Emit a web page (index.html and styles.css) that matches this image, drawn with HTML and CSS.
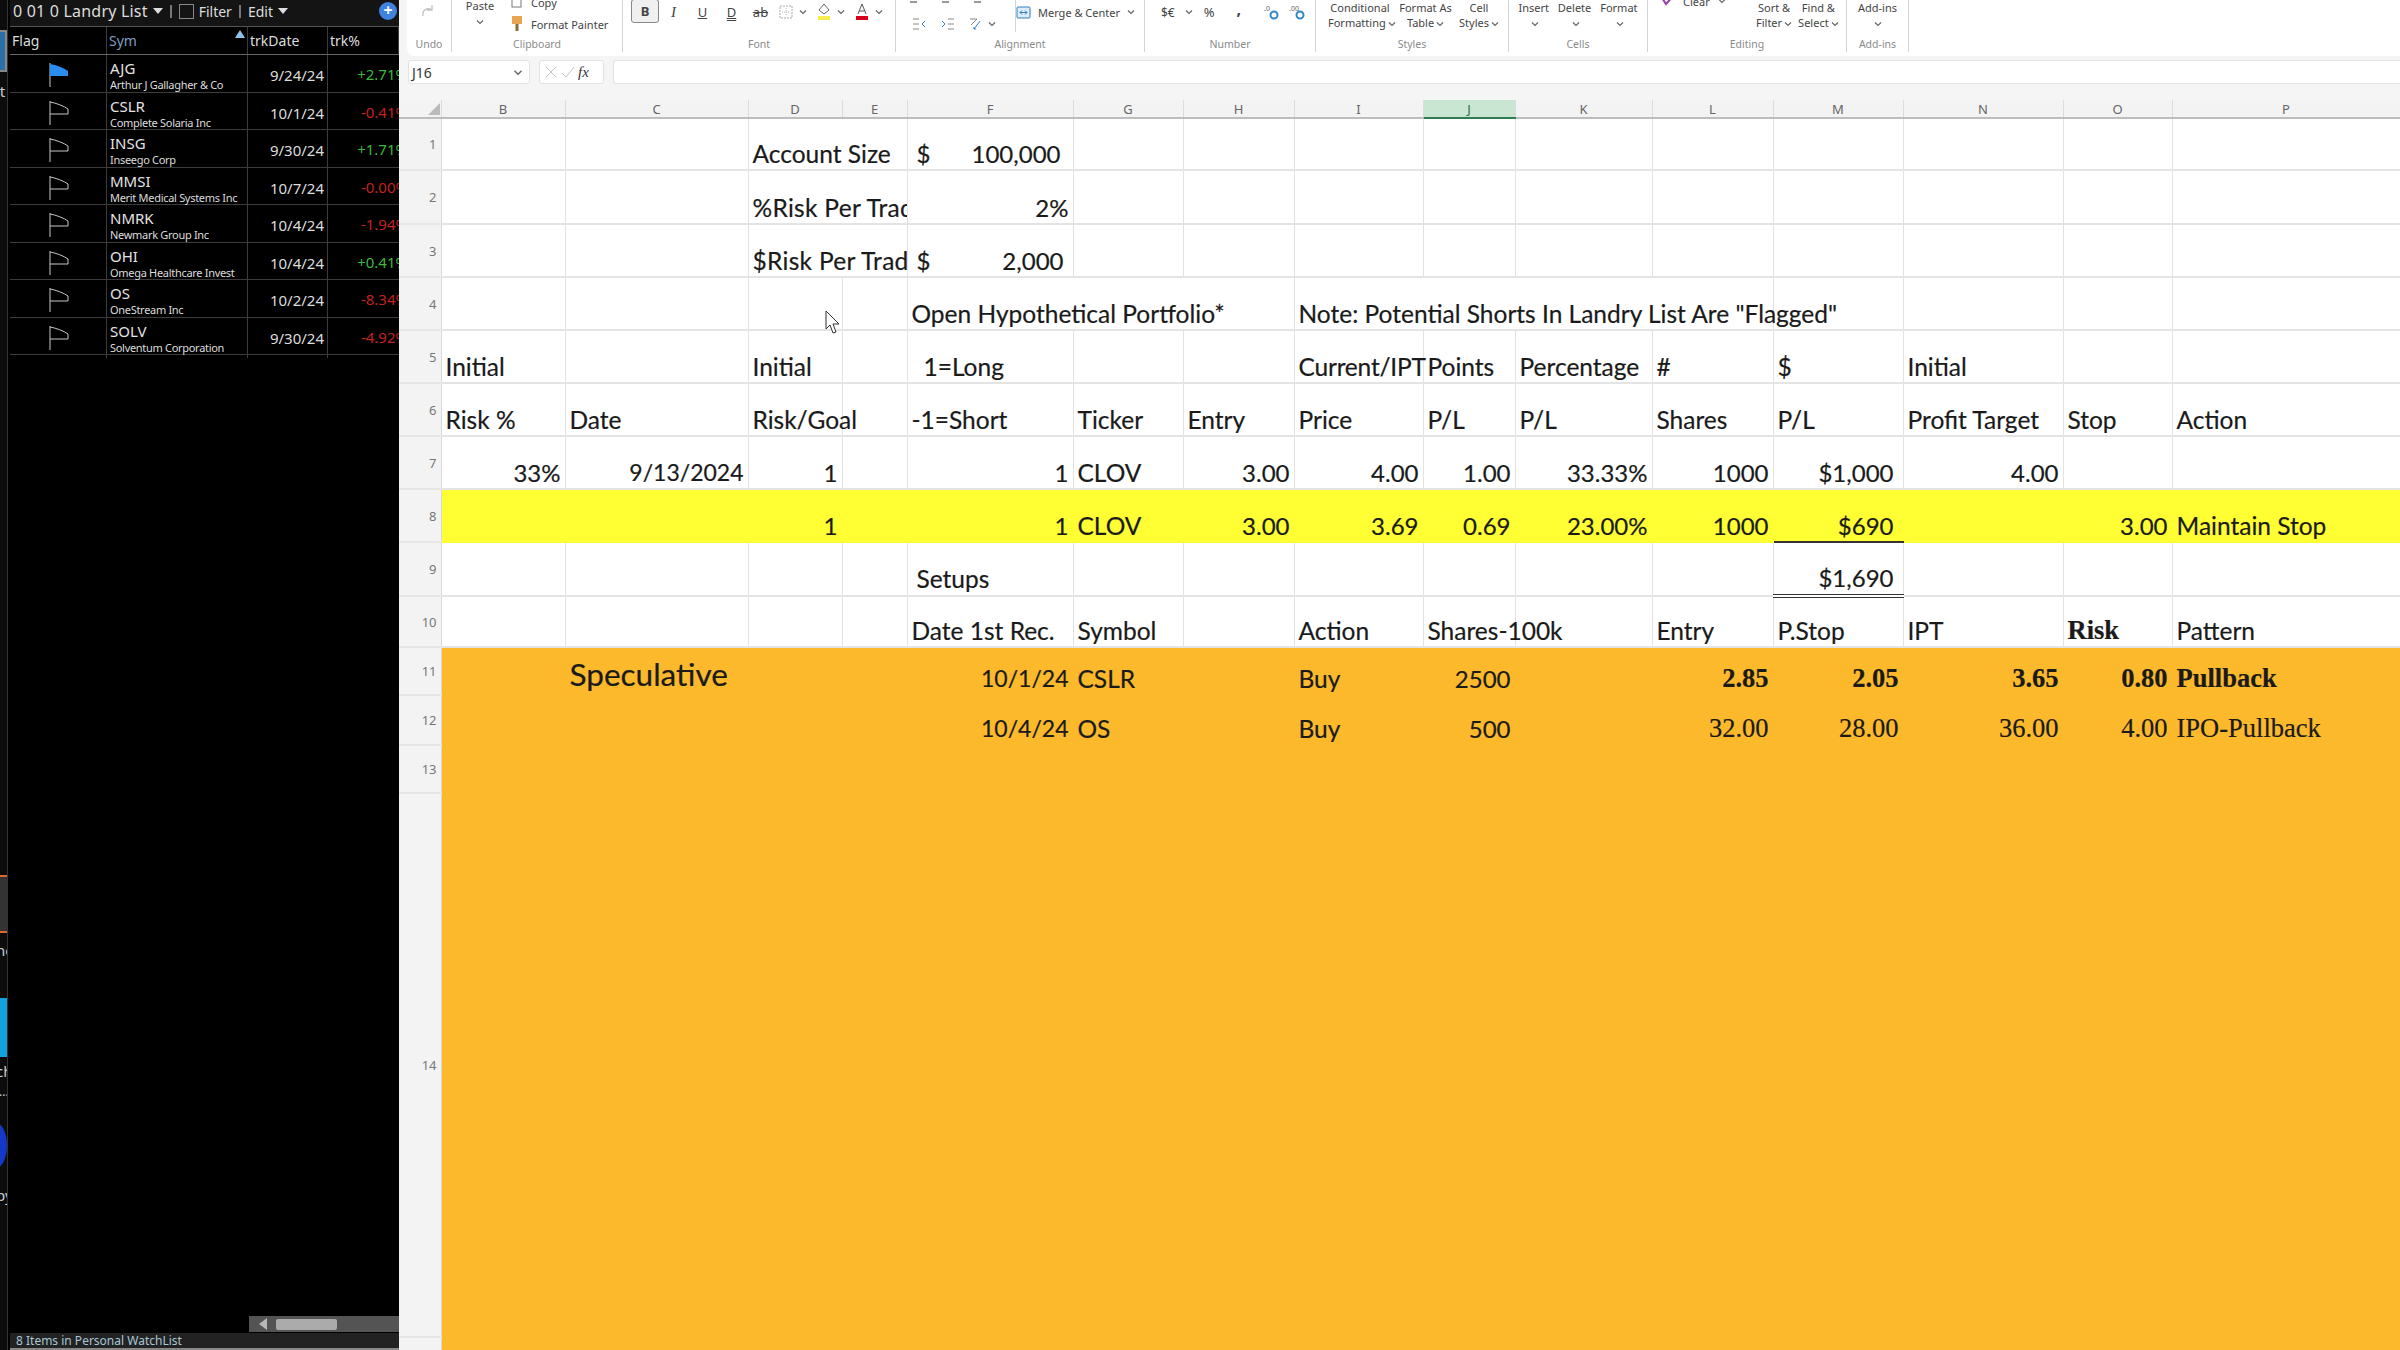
FILE: index.html
```html
<!DOCTYPE html>
<html lang="en">
<head>
    <meta charset="UTF-8">
    <title>Landry List</title>
    <link rel="stylesheet" href="styles.css">
</head>
<body>
    <svg class="defs" width="0" height="0">
        <symbol id="chev" viewBox="0 0 8 6"><path d="M1 1.5 4 4.5 7 1.5" fill="none" stroke="#666" stroke-width="1.2"/></symbol>
        <symbol id="flag" viewBox="0 0 22 26"><path d="M2 1V25M2 2C8 3 16 6 20 9V14H2" fill="none" stroke="#c8c8c8" stroke-width="1"/></symbol>
    </svg>

    <!-- cut-off neighbour window on the far left -->
    <div class="strip">
        <div class="strip-lock"></div>
        <span class="strip-text strip-it">it</span>
        <div class="strip-orange"></div>
        <span class="strip-text strip-nc">nc</span>
        <div class="strip-blue"></div>
        <span class="strip-text strip-ch">ch</span>
        <span class="strip-text strip-dots">...</span>
        <div class="strip-circle"></div>
        <span class="strip-text strip-py">py</span>
    </div>

    <!-- watchlist -->
    <aside class="watch">
        <div class="watch-top">
            <span class="watch-title">0 01 0 Landry List</span>
            <i class="tri"></i>
            <i class="bar"></i>
            <i class="check"></i>
            <span>Filter</span>
            <i class="bar"></i>
            <span>Edit</span>
            <i class="tri"></i>
            <span class="plus">+</span>
        </div>
        <div class="watch-row watch-head">
            <div>Flag</div>
            <div class="sym-head">Sym<i class="sort"></i></div>
            <div>trkDate</div>
            <div>trk%</div>
        </div>
        <div class="watch-row">
            <div class="flag-cell"><svg width="22" height="26" viewBox="0 0 22 26"><path d="M2 1V25" stroke="#c8c8c8" fill="none"/><path d="M2 2C8 3 16 6 20 9V14H2Z" fill="#2a8cf0"/></svg></div>
            <div class="sym"><b>AJG</b><small>Arthur J Gallagher &amp; Co</small></div>
            <div class="date">9/24/24</div>
            <div class="pct up"><span>+2.71%</span></div>
        </div>
        <div class="watch-row">
            <div class="flag-cell"><svg width="22" height="26"><use href="#flag"/></svg></div>
            <div class="sym"><b>CSLR</b><small>Complete Solaria Inc</small></div>
            <div class="date">10/1/24</div>
            <div class="pct down"><span>-0.41%</span></div>
        </div>
        <div class="watch-row">
            <div class="flag-cell"><svg width="22" height="26"><use href="#flag"/></svg></div>
            <div class="sym"><b>INSG</b><small>Inseego Corp</small></div>
            <div class="date">9/30/24</div>
            <div class="pct up"><span>+1.71%</span></div>
        </div>
        <div class="watch-row">
            <div class="flag-cell"><svg width="22" height="26"><use href="#flag"/></svg></div>
            <div class="sym"><b>MMSI</b><small>Merit Medical Systems Inc</small></div>
            <div class="date">10/7/24</div>
            <div class="pct down"><span>-0.00%</span></div>
        </div>
        <div class="watch-row">
            <div class="flag-cell"><svg width="22" height="26"><use href="#flag"/></svg></div>
            <div class="sym"><b>NMRK</b><small>Newmark Group Inc</small></div>
            <div class="date">10/4/24</div>
            <div class="pct down"><span>-1.94%</span></div>
        </div>
        <div class="watch-row">
            <div class="flag-cell"><svg width="22" height="26"><use href="#flag"/></svg></div>
            <div class="sym"><b>OHI</b><small>Omega Healthcare Invest</small></div>
            <div class="date">10/4/24</div>
            <div class="pct up"><span>+0.41%</span></div>
        </div>
        <div class="watch-row">
            <div class="flag-cell"><svg width="22" height="26"><use href="#flag"/></svg></div>
            <div class="sym"><b>OS</b><small>OneStream Inc</small></div>
            <div class="date">10/2/24</div>
            <div class="pct down"><span>-8.34%</span></div>
        </div>
        <div class="watch-row">
            <div class="flag-cell"><svg width="22" height="26"><use href="#flag"/></svg></div>
            <div class="sym"><b>SOLV</b><small>Solventum Corporation</small></div>
            <div class="date">9/30/24</div>
            <div class="pct down"><span>-4.92%</span></div>
        </div>
        <div class="watch-fill"></div>
        <div class="watch-scroll">
            <div class="scroll-track"><i class="scroll-arrow"></i><i class="scroll-thumb"></i></div>
        </div>
        <div class="watch-status">8 Items in Personal WatchList</div>
    </aside>

    <main class="excel">
        <!-- ribbon -->
        <div class="ribbon">
            <div class="group g-undo">
                <div class="group-body">
                    <svg class="redo" width="16" height="16" viewBox="0 0 16 16"><path d="M3 13C2 7 7 4 12 7M12 2V7H7" fill="none" stroke="#c4c4c4" stroke-width="1.4"/></svg>
                </div>
                <div class="group-label">Undo</div>
            </div>
            <div class="group g-clip">
                <div class="group-body">
                    <div class="paste">Paste<svg width="8" height="6"><use href="#chev"/></svg></div>
                    <div class="clip-list">
                        <div class="clip-item clip-copy"><svg width="14" height="14" viewBox="0 0 14 14"><rect x="2" y="1" width="9" height="11" fill="none" stroke="#777"/></svg>Copy</div>
                        <div class="clip-item"><svg width="14" height="18" viewBox="0 0 14 18"><rect x="2" y="1" width="10" height="8" fill="#e8a552"/><path d="M7 9V16" stroke="#8a6a3a" stroke-width="3"/></svg>Format Painter</div>
                    </div>
                </div>
                <div class="group-label">Clipboard</div>
            </div>
            <div class="group g-font">
                <div class="group-body font-tools">
                    <span class="tool tool-bold">B</span>
                    <span class="tool tool-i">I</span>
                    <span class="tool tool-u">U</span>
                    <span class="tool tool-d">D</span>
                    <span class="tool tool-s">ab</span>
                    <svg width="14" height="14" viewBox="0 0 14 14"><rect x="1" y="1" width="12" height="12" fill="none" stroke="#aaa" stroke-dasharray="2 1"/><path d="M7 3V11M3 7H11" stroke="#bbb" stroke-dasharray="1 1"/></svg>
                    <svg class="mini" width="8" height="6"><use href="#chev"/></svg>
                    <svg class="tool-fill" width="14" height="18" viewBox="0 0 14 18"><path d="M7 1 12 7 7 11 2 7Z" fill="none" stroke="#666"/><rect x="1" y="13" width="12" height="4" fill="#f6ee50"/></svg>
                    <svg class="mini" width="8" height="6"><use href="#chev"/></svg>
                    <svg class="tool-fill" width="14" height="18" viewBox="0 0 14 18"><path d="M3 11 7 1 11 11M4.500 8H9.500" fill="none" stroke="#555"/><rect x="1" y="13" width="12" height="4" fill="#d8001a"/></svg>
                    <svg class="mini" width="8" height="6"><use href="#chev"/></svg>
                </div>
                <div class="group-label">Font</div>
            </div>
            <div class="group g-align">
                <div class="group-body align-tools">
                    <div class="align-col">
                        <div class="align-top"><i></i><i></i><i></i></div>
                        <div class="align-bottom">
                            <svg width="15" height="12" viewBox="0 0 15 12"><path d="M1 1H7M1 6H7M1 11H7" stroke="#888"/><path d="M13 3 10 6 13 9" fill="none" stroke="#3a86c8"/></svg>
                            <svg width="15" height="12" viewBox="0 0 15 12"><path d="M8 1H14M8 6H14M8 11H14" stroke="#888"/><path d="M2 3 5 6 2 9" fill="none" stroke="#3a86c8"/></svg>
                            <svg width="15" height="14" viewBox="0 0 15 14"><path d="M2 2H9L3 8" fill="none" stroke="#888"/><path d="M12 4 6 12M8 12H6V10" fill="none" stroke="#3a86c8"/></svg>
                            <svg width="8" height="6"><use href="#chev"/></svg>
                        </div>
                    </div>
                    <div class="merge">
                        <svg width="15" height="15" viewBox="0 0 15 15"><rect x="1" y="2" width="13" height="11" rx="1" fill="#dcecf8" stroke="#2f7fbf"/><path d="M4 7.500H11M4 7.500 6 5.500M4 7.500 6 9.500M11 7.500 9 5.500M11 7.500 9 9.500" fill="none" stroke="#2f7fbf"/></svg>
                        <span>Merge &amp; Center</span>
                        <svg width="8" height="6"><use href="#chev"/></svg>
                    </div>
                </div>
                <div class="group-label">Alignment</div>
            </div>
            <div class="group g-num">
                <div class="group-body num-tools">
                    <span class="num-currency">$€</span>
                    <svg width="8" height="6"><use href="#chev"/></svg>
                    <span class="num-pct">%</span>
                    <span class="num-comma">,</span>
                    <svg width="16" height="16" viewBox="0 0 16 16"><text x="1" y="7" font-size="7" fill="#666">.0</text><circle cx="11" cy="11" r="3.500" fill="none" stroke="#2f86c8" stroke-width="2"/></svg>
                    <svg width="16" height="16" viewBox="0 0 16 16"><text x="0" y="7" font-size="7" fill="#666">.00</text><circle cx="11" cy="11" r="3.500" fill="none" stroke="#2f86c8" stroke-width="2"/></svg>
                </div>
                <div class="group-label">Number</div>
            </div>
            <div class="group g-styles">
                <div class="group-body stack-tools">
                    <div class="stack s-cond">Conditional<br>Formatting<svg width="8" height="6"><use href="#chev"/></svg></div>
                    <div class="stack s-table">Format As<br>Table<svg width="8" height="6"><use href="#chev"/></svg></div>
                    <div class="stack s-cell">Cell<br>Styles<svg width="8" height="6"><use href="#chev"/></svg></div>
                </div>
                <div class="group-label">Styles</div>
            </div>
            <div class="group g-cells">
                <div class="group-body cell-tools">
                    <div class="stack">Insert<br><svg width="8" height="6"><use href="#chev"/></svg></div>
                    <div class="stack">Delete<br><svg width="8" height="6"><use href="#chev"/></svg></div>
                    <div class="stack">Format<br><svg width="8" height="6"><use href="#chev"/></svg></div>
                </div>
                <div class="group-label">Cells</div>
            </div>
            <div class="group g-edit">
                <div class="group-body edit-tools">
                    <div class="clear">
                        <svg width="14" height="12" viewBox="0 0 14 12"><path d="M1 3 5 9 13 0" fill="none" stroke="#9b3fae" stroke-width="2"/></svg>
                        <span>Clear</span>
                        <svg width="8" height="6"><use href="#chev"/></svg>
                    </div>
                    <div class="stack s-sort">Sort &amp;<br>Filter<svg width="8" height="6"><use href="#chev"/></svg></div>
                    <div class="stack">Find &amp;<br>Select<svg width="8" height="6"><use href="#chev"/></svg></div>
                </div>
                <div class="group-label">Editing</div>
            </div>
            <div class="group g-add">
                <div class="group-body addin-tools">
                    <div class="stack">Add-ins<br><svg width="8" height="6"><use href="#chev"/></svg></div>
                </div>
                <div class="group-label">Add-ins</div>
            </div>
        </div>

        <!-- formula bar -->
        <div class="formula">
            <div class="name-box">J16<svg width="10" height="7"><use href="#chev"/></svg></div>
            <div class="fx-box">
                <svg width="14" height="14" viewBox="0 0 14 14"><path d="M2 2 12 12M12 2 2 12" stroke="#c4c4c4"/></svg>
                <svg width="14" height="14" viewBox="0 0 14 14"><path d="M1 8 5 12 13 2" fill="none" stroke="#c4c4c4"/></svg>
                <span class="fx">fx</span>
            </div>
            <div class="formula-input"></div>
        </div>

        <table class="sheet">
            <colgroup>
                <col class="c-hdr"><col class="c-b"><col class="c-c"><col class="c-d"><col class="c-e"><col class="c-f"><col class="c-g"><col class="c-h"><col class="c-i"><col class="c-j"><col class="c-k"><col class="c-l"><col class="c-m"><col class="c-n"><col class="c-o"><col class="c-p">
            </colgroup>
            <thead>
                <tr>
                    <th class="corner"><i></i></th><th>B</th><th>C</th><th>D</th><th>E</th><th>F</th><th>G</th><th>H</th><th>I</th><th class="active">J</th><th>K</th><th>L</th><th>M</th><th>N</th><th>O</th><th>P</th>
                </tr>
            </thead>
            <tbody>
                <tr class="r1">
                    <th>1</th><td></td><td></td><td colspan="2" class="clip">Account Size</td><td><div class="acct"><span>$</span><span>100,000</span></div></td><td></td><td></td><td></td><td></td><td></td><td></td><td></td><td></td><td></td><td></td>
                </tr>
                <tr class="r2">
                    <th>2</th><td></td><td></td><td colspan="2" class="clip clip-wide">%Risk Per Trade</td><td class="num tight">2%</td><td></td><td></td><td></td><td></td><td></td><td></td><td></td><td></td><td></td><td></td>
                </tr>
                <tr class="r3">
                    <th>3</th><td></td><td></td><td colspan="2" class="clip clip-wide">$Risk Per Trade</td><td><div class="acct acct-small"><span>$</span><span>2,000</span></div></td><td></td><td></td><td></td><td></td><td></td><td></td><td></td><td></td><td></td><td></td>
                </tr>
                <tr class="r4">
                    <th>4</th><td></td><td></td><td></td><td></td><td colspan="3">Open Hypothetical Portfolio*</td><td colspan="4">Note: Potential Shorts In Landry List Are "Flagged"</td><td></td><td></td><td></td><td></td>
                </tr>
                <tr class="r5">
                    <th>5</th><td>Initial</td><td></td><td>Initial</td><td></td><td class="in-long">1=Long</td><td></td><td></td><td class="snug">Current/IPT</td><td>Points</td><td>Percentage</td><td>#</td><td>$</td><td>Initial</td><td></td><td></td>
                </tr>
                <tr class="r6">
                    <th>6</th><td>Risk %</td><td>Date</td><td>Risk/Goal</td><td></td><td>-1=Short</td><td>Ticker</td><td>Entry</td><td>Price</td><td>P/L</td><td>P/L</td><td>Shares</td><td>P/L</td><td>Profit Target</td><td>Stop</td><td>Action</td>
                </tr>
                <tr class="r7">
                    <th>7</th><td class="num">33%</td><td class="num day">9/13/2024</td><td class="num">1</td><td></td><td class="num">1</td><td>CLOV</td><td class="num">3.00</td><td class="num">4.00</td><td class="num">1.00</td><td class="num">33.33%</td><td class="num">1000</td><td class="num pad-money">$1,000</td><td class="num">4.00</td><td></td><td></td>
                </tr>
                <tr class="r8 hl-yellow">
                    <th>8</th><td></td><td></td><td class="num">1</td><td></td><td class="num">1</td><td>CLOV</td><td class="num">3.00</td><td class="num">3.69</td><td class="num">0.69</td><td class="num">23.00%</td><td class="num">1000</td><td class="num pad-money sum-top">$690</td><td></td><td class="num">3.00</td><td>Maintain Stop</td>
                </tr>
                <tr class="r9">
                    <th>9</th><td></td><td></td><td></td><td></td><td class="in-setups">Setups</td><td></td><td></td><td></td><td></td><td></td><td></td><td class="num pad-money sum-total">$1,690</td><td></td><td></td><td></td>
                </tr>
                <tr class="r10">
                    <th>10</th><td></td><td></td><td></td><td></td><td>Date 1st Rec.</td><td>Symbol</td><td></td><td>Action</td><td>Shares-100k</td><td></td><td>Entry</td><td>P.Stop</td><td>IPT</td><td class="serif strong">Risk</td><td>Pattern</td>
                </tr>
                <tr class="r11 hl-orange">
                    <th>11</th><td></td><td class="spec">Speculative</td><td></td><td></td><td class="num day">10/1/24</td><td>CSLR</td><td></td><td>Buy</td><td class="num">2500</td><td></td><td class="num serif strong">2.85</td><td class="num serif strong">2.05</td><td class="num serif strong">3.65</td><td class="num serif strong">0.80</td><td class="serif strong">Pullback</td>
                </tr>
                <tr class="r12 hl-orange">
                    <th>12</th><td></td><td></td><td></td><td></td><td class="num day">10/4/24</td><td>OS</td><td></td><td>Buy</td><td class="num">500</td><td></td><td class="num serif">32.00</td><td class="num serif">28.00</td><td class="num serif">36.00</td><td class="num serif">4.00</td><td class="serif">IPO-Pullback</td>
                </tr>
                <tr class="r13 hl-orange">
                    <th>13</th><td colspan="15"></td>
                </tr>
                <tr class="r14 hl-orange">
                    <th>14</th><td colspan="15"></td>
                </tr>
                <tr class="r15 hl-orange">
                    <th>15</th><td colspan="15"></td>
                </tr>
            </tbody>
        </table>
    </main>

    <!-- mouse pointer caught in the recording -->
    <svg class="pointer" width="18" height="26" viewBox="0 0 18 26"><path d="M2 2V20L6 16 9 24 12 23 9 15H15Z" fill="#fff" stroke="#333" stroke-width="1"/></svg>
</body>
</html>
```

FILE: styles.css
```css
* {
    margin: 0;
    padding: 0;
    box-sizing: border-box;
}

body {
    width: 2400px;
    height: 1350px;
    overflow: hidden;
    display: flex;
    position: relative;
    background: #000;
    font-family: "Noto Sans", sans-serif;
}

.defs {
    position: absolute;
}

/* far left strip */
.strip {
    width: 8px;
    flex: none;
    display: flex;
    flex-direction: column;
    background: #0c0c0c;
    border-right: 1px solid #333;
    overflow: hidden;
    color: #ccc;
}

.strip-lock {
    height: 42px;
    margin-top: 30px;
    background: #2b6fa8;
    border: 2px solid #888;
    border-left: 0;
}

.strip-text {
    font-size: 15px;
    line-height: 18px;
    height: 18px;
    margin-left: -4px;
    white-space: nowrap;
}

.strip-it { margin-top: 10px; }

.strip-orange {
    height: 58px;
    margin-top: 775px;
    background: #333;
    border-top: 2px solid #e0662a;
    border-bottom: 2px solid #e0662a;
}

.strip-nc { margin-top: 8px; }

.strip-blue {
    height: 59px;
    margin-top: 39px;
    background: #13a3dc;
}

.strip-ch { margin-top: 5px; }

.strip-dots {
    margin: 3px 0 0 -1px;
    font-size: 12px;
}

.strip-circle {
    width: 22px;
    height: 45px;
    flex: none;
    margin: 22px 0 0 -15px;
    border-radius: 50%;
    background: #1438c8;
}

.strip-py { margin-top: 18px; }

/* watchlist panel */
.watch {
    width: 391px;
    flex: none;
    display: flex;
    flex-direction: column;
    padding-left: 2px;
    background: #000;
    color: #ddd;
    overflow: hidden;
}

.watch-top {
    height: 27px;
    flex: none;
    display: flex;
    align-items: center;
    gap: 5px;
    padding: 0 0 4px 3px;
    background: #141414;
    border-bottom: 1px solid #555;
    font-size: 14px;
}

.watch-title {
    font-size: 16px;
    letter-spacing: 0.2px;
    white-space: nowrap;
}

.tri {
    width: 0;
    height: 0;
    border: 5px solid transparent;
    border-top: 6px solid #ddd;
    border-bottom: 0;
}

.bar {
    width: 2px;
    height: 13px;
    margin: 0 2px;
    background: #777;
}

.check {
    width: 15px;
    height: 15px;
    border: 1px solid #888;
}

.plus {
    width: 18px;
    height: 18px;
    margin-left: auto;
    margin-right: 2px;
    border-radius: 50%;
    background: #3f82e0;
    color: #fff;
    font-size: 16px;
    font-weight: 700;
    line-height: 17px;
    text-align: center;
}

.watch-row {
    display: grid;
    grid-template-columns: 97px 141px 80px 71px;
    height: 37.500px;
    flex: none;
    border-bottom: 1px solid #3c3c3c;
}

.watch-row > div {
    border-right: 1px solid #3c3c3c;
    min-width: 0;
}

.watch-head {
    height: 28px;
    border-bottom: 1px solid #666;
    font-size: 14px;
    line-height: 27px;
    color: #ddd;
}

.watch-head > div {
    padding-left: 2px;
}

.sym-head {
    position: relative;
    color: #7f9cc0;
}

.sort {
    position: absolute;
    top: 3px;
    right: 2px;
    width: 0;
    height: 0;
    border: 5.500px solid transparent;
    border-bottom: 8px solid #8ec4ea;
    border-top: 0;
}

.flag-cell {
    display: flex;
    align-items: center;
    padding-left: 38px;
}

.sym {
    padding: 5px 0 0 3px;
    white-space: nowrap;
}

.sym b {
    display: block;
    font-weight: 400;
    font-size: 15px;
    line-height: 17px;
    color: #e4e4e4;
}

.sym small {
    display: block;
    font-size: 11px;
    line-height: 15px;
    letter-spacing: -0.3px;
    color: #ddd;
}

.date {
    padding-right: 3px;
    text-align: right;
    font-size: 15px;
    line-height: 40px;
    color: #ddd;
}

.pct {
    display: flex;
    justify-content: flex-end;
    overflow: hidden;
    font-size: 15px;
    line-height: 39px;
    border-right: 0 !important;
}

.pct span {
    margin-right: -9px;
}

.up { color: #3cb83c; }
.down { color: #c22222; }

.watch-fill {
    flex: 1;
}

.watch-scroll {
    height: 16px;
    flex: none;
    display: flex;
    justify-content: flex-end;
}

.scroll-track {
    width: 150px;
    display: flex;
    align-items: center;
    padding-left: 10px;
    background: #545454;
}

.scroll-arrow {
    width: 0;
    height: 0;
    border: 6px solid transparent;
    border-right: 8px solid #b8b8b8;
    border-left: 0;
}

.scroll-thumb {
    width: 61px;
    height: 11px;
    margin-left: 9px;
    border-radius: 2px;
    background: #ababab;
}

.watch-status {
    height: 17px;
    flex: none;
    margin-top: 1px;
    padding-left: 6px;
    background: #222;
    border-bottom: 2px solid #888;
    font-size: 12px;
    line-height: 15px;
    color: #a9c6d4;
}

/* excel window */
.excel {
    flex: 1;
    min-width: 0;
    display: flex;
    flex-direction: column;
    background: #f5f5f5;
}

.ribbon {
    height: 56px;
    flex: none;
    margin-left: 8px;
    display: flex;
    overflow: hidden;
    background: #fff;
    border-bottom-left-radius: 8px;
    font-size: 11px;
    color: #444;
}

.group {
    flex: none;
    height: 52px;
    display: flex;
    flex-direction: column;
    border-right: 1px solid #d4d4d4;
}

.group-body {
    height: 38px;
    display: flex;
}

.group-label {
    height: 14px;
    text-align: center;
    font-size: 10.500px;
    line-height: 13px;
    color: #8a8a8a;
}

.g-undo { width: 45px; }
.g-clip { width: 171px; }
.g-font { width: 273px; }
.g-align { width: 249px; }
.g-num { width: 171px; }
.g-styles { width: 193px; }
.g-cells { width: 139px; }
.g-edit { width: 199px; }
.g-add { width: 62px; }

.redo {
    margin: 3px 0 0 13px;
}

.paste {
    width: 50px;
    margin: -2px 0 0 3px;
    display: flex;
    flex-direction: column;
    align-items: center;
    gap: 6px;
}

.clip-list {
    margin-left: 5px;
    display: flex;
    flex-direction: column;
}

.clip-item {
    height: 20px;
    display: flex;
    align-items: center;
    gap: 7px;
    white-space: nowrap;
}

.clip-copy {
    margin-top: -8px;
    margin-bottom: 2px;
}

.font-tools {
    align-items: center;
    gap: 0;
    height: 24px;
    margin-bottom: 14px;
    padding-left: 8px;
    font-size: 13px;
}

.tool {
    width: 29px;
    text-align: center;
}

.tool-bold {
    width: 28px;
    height: 24px;
    margin-top: -2px;
    border: 1px solid #888;
    border-radius: 3px;
    background: #f0f0f0;
    font-weight: 700;
    line-height: 22px;
}

.tool-i {
    font-style: italic;
    font-family: "Liberation Serif", serif;
    font-size: 15px;
}

.tool-u { text-decoration: underline; }

.tool-d {
    text-decoration: underline double;
}

.tool-s {
    text-decoration: line-through;
    margin-right: 4px;
}

.mini {
    margin: 0 8px 0 6px;
}

.tool-fill {
    margin-left: 2px;
    margin-right: 0;
}

.align-tools {
    padding-left: 10px;
}

.align-col {
    width: 110px;
    display: flex;
    flex-direction: column;
    border-right: 1px solid #d4d4d4;
    height: 32px;
}

.align-top {
    height: 6px;
    display: flex;
    gap: 25px;
    padding: 1px 0 0 4px;
}

.align-top i {
    width: 7px;
    height: 1.500px;
    background: #999;
}

.align-bottom {
    margin-top: 11px;
    padding-left: 6px;
    display: flex;
    align-items: center;
    gap: 13px;
}

.align-bottom svg:last-child {
    margin-left: -8px;
}

.merge {
    height: 24px;
    margin-left: 0;
    display: flex;
    align-items: center;
    gap: 7px;
    white-space: nowrap;
}

.num-tools {
    height: 24px;
    margin-bottom: 14px;
    align-items: center;
    padding-left: 16px;
    gap: 10px;
}

.num-currency {
    font-size: 12px;
}

.num-pct {
    margin-left: 1px;
    font-size: 13px;
}

.num-comma {
    margin: -6px 12px 0 12px;
    font-size: 16px;
    font-weight: 700;
}

.stack {
    text-align: center;
    line-height: 15px;
    white-space: nowrap;
}

.stack svg {
    margin-left: 2px;
}

.stack-tools {
    gap: 6px;
    padding: 0 0 0 12px;
}

.s-cond { width: 64px; }
.s-table { width: 55px; }
.s-cell { width: 40px; }

.cell-tools {
    justify-content: space-around;
    padding: 0 5px;
}

.edit-tools {
    padding-left: 13px;
}

.clear {
    width: 95px;
    height: 12px;
    margin-top: -5px;
    display: flex;
    align-items: center;
    gap: 8px;
}

.s-sort {
    margin-right: 6px;
}

.addin-tools {
    justify-content: center;
}

.formula {
    height: 24px;
    flex: none;
    margin-top: 4px;
    display: flex;
    gap: 9px;
    padding-left: 9px;
    font-size: 14px;
    color: #333;
}

.name-box {
    width: 122px;
    display: flex;
    align-items: center;
    justify-content: space-between;
    padding: 0 6px 0 3px;
    background: #fff;
    border: 1px solid #e2e2e2;
    border-radius: 3px;
}

.fx-box {
    width: 65px;
    display: flex;
    align-items: center;
    gap: 3px;
    padding-left: 4px;
    background: #fff;
    border: 1px solid #e2e2e2;
    border-radius: 3px;
}

.fx {
    font-family: "Liberation Serif", serif;
    font-style: italic;
    font-size: 15px;
}

.formula-input {
    flex: 1;
    background: #fff;
    border: 1px solid #e2e2e2;
    border-right: 0;
    border-radius: 3px 0 0 3px;
}

/* the spreadsheet */
.sheet {
    width: 2001px;
    flex: none;
    margin-top: 16px;
    table-layout: fixed;
    border-collapse: collapse;
    font-family: Lato, "Liberation Sans", sans-serif;
    font-size: 24.500px;
    -webkit-text-stroke: 0.2px;
    color: #1a1a1a;
}

.c-hdr { width: 42px; }
.c-b { width: 124px; }
.c-c { width: 183px; }
.c-d { width: 94px; }
.c-e { width: 65px; }
.c-f { width: 166px; }
.c-g { width: 110px; }
.c-h { width: 111px; }
.c-i { width: 129px; }
.c-j { width: 92px; }
.c-k { width: 137px; }
.c-l { width: 121px; }
.c-m { width: 130px; }
.c-n { width: 160px; }
.c-o { width: 109px; }
.c-p { width: 228px; }

thead tr {
    height: 18px;
}

thead th {
    background: #f3f3f3;
    border-right: 1px solid #dcdcdc;
    border-bottom: 2px solid #bdbdbd;
    font-size: 13px;
    font-weight: 400;
    color: #666;
    font-family: "Noto Sans", sans-serif;
    -webkit-text-stroke: 0;
    line-height: 16px;
}

thead th.active {
    background: #c9e6d3;
    border-bottom-color: #2f7d52;
    color: #2f6b4a;
}

.corner {
    position: relative;
}

.corner i {
    position: absolute;
    right: 1px;
    bottom: 2px;
    width: 0;
    height: 0;
    border-left: 12px solid transparent;
    border-bottom: 12px solid #bbb;
}

tbody th {
    padding-right: 4px;
    background: #f3f3f3;
    border-right: 1px solid #d8d8d8;
    border-bottom: 2px solid #e6e6e6;
    text-align: right;
    vertical-align: middle;
    font-family: "Noto Sans", sans-serif;
    font-size: 13px;
    font-weight: 400;
    -webkit-text-stroke: 0;
    color: #777;
}

tbody td {
    padding: 0 4px 2px;
    background: #fff;
    border-right: 1px solid #e2e2e2;
    border-bottom: 2px solid #e4e4e4;
    vertical-align: bottom;
    line-height: 27px;
    white-space: nowrap;
}

.r1 { height: 52px; }
.r2 { height: 54px; }
.r3 { height: 53px; }
.r4 { height: 53px; }
.r5 { height: 53px; }
.r6 { height: 53px; }
.r7 { height: 53px; }
.r8 { height: 53px; }
.r9 { height: 54px; }
.r10 { height: 51px; }
.r11 { height: 48px; }
.r12 { height: 50px; }
.r13 { height: 48px; }
.r14 { height: 544px; }
.r15 { height: 60px; }

.r9 td {
    padding-bottom: 3px;
}

td.clip {
    overflow: hidden;
    text-overflow: clip;
}

td.clip-wide {
    letter-spacing: 0.3px;
}

td.num {
    font-size: 24px;
    text-align: right;
}

td.day {
    font-size: 23px;
}

td.snug {
    letter-spacing: -0.2px;
}

td.tight {
    padding-right: 4px;
}

td.pad-money {
    padding-right: 9px;
}

.acct {
    display: flex;
    justify-content: space-between;
    padding: 0 8px 0 5px;
    font-size: 24px;
}

.acct-small {
    padding-right: 5px;
}

td.in-long {
    padding-left: 16px;
}

td.in-setups {
    padding-left: 9px;
}

.hl-yellow td {
    background: #ffff33;
    border-right-color: #ffff33;
    border-bottom-color: #ffff33;
}

.hl-orange td {
    background: #fcb92b;
    border-right-color: #fcb92b;
    border-bottom-color: #fcb92b;
}

.hl-yellow td.sum-top {
    border-bottom: 2px solid #333;
}

td.sum-total {
    border-bottom: 4px double #333;
}

td.serif {
    font-family: "Liberation Serif", serif;
    font-size: 26.500px;
}

.strong {
    font-weight: 700;
}

td.spec {
    font-size: 31.500px;
    line-height: 40px;
    padding-bottom: 0;
}

.pointer {
    position: absolute;
    left: 824px;
    top: 309px;
}
```
